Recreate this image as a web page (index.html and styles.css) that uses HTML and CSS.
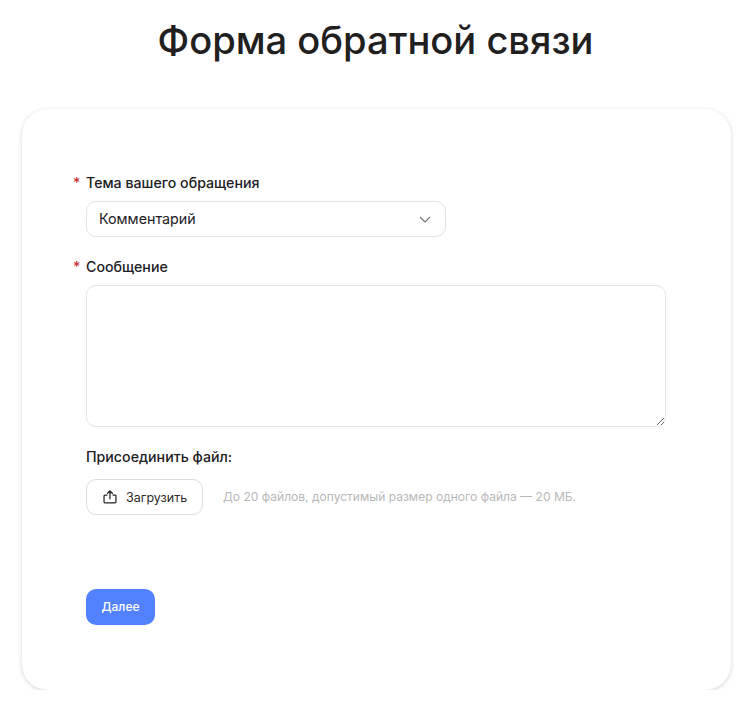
FILE: index.html
```html
<!DOCTYPE html>
<html>
<head>
    <meta charset="UTF-8">
    <title>Форма обратной связи</title>
    <link rel="stylesheet" href="styles.css">
</head>
<body>
    <h1 class="page-title">Форма обратной связи</h1>
    <form class="card">
        <div class="field field-topic">
            <div class="label required">Тема вашего обращения</div>
            <div class="select">
                <span>Комментарий</span>
                <svg class="select-arrow" width="12" height="7" viewBox="0 0 12 7" fill="none">
                    <path d="M1 1L6 6L11 1" stroke="#707070" stroke-width="1.1"/>
                </svg>
            </div>
        </div>
        <div class="field field-message">
            <div class="label required">Сообщение</div>
            <textarea class="message"></textarea>
        </div>
        <div class="field field-file">
            <div class="label">Присоединить файл:</div>
            <div class="upload-row">
                <button type="button" class="upload-button">
                    <svg width="14" height="14" viewBox="0 0 16 16" fill="none">
                        <path d="M5 5.8H2.2C1.6 5.8 1.2 6.2 1.2 6.8V13.6C1.2 14.2 1.6 14.6 2.2 14.6H13.8C14.4 14.6 14.8 14.2 14.8 13.6V6.8C14.8 6.2 14.4 5.8 13.8 5.8H11M8 10.5V1.3M4.8 4.3L8 1.1L11.2 4.3" stroke="#222" stroke-width="1.4"/>
                    </svg>
                    Загрузить
                </button>
                <span class="upload-hint">До 20 файлов, допустимый размер одного файла — 20 МБ.</span>
            </div>
        </div>
        <button type="button" class="next-button">Далее</button>
    </form>
</body>
</html>
```

FILE: styles.css
```css
body {
    margin: 0;
    background-color: #fff;
    color: #21201f;
    font-family: "Inter", "Noto Sans", sans-serif;
}

.page-title {
    margin: 0;
    padding: 16px 2px 0 0;
    height: 91px;
    box-sizing: border-box;
    text-align: center;
    font-size: 38.1px;
    line-height: 48px;
    font-weight: 500;
}

.card {
    width: 709px;
    height: 581px;
    box-sizing: border-box;
    margin: 18px 0 0 22px;
    padding: 64px 64px 0;
    border-radius: 26px;
    background-color: #fff;
    box-shadow: 0 1px 4px rgba(0, 0, 0, 0.18);
}

.label {
    position: relative;
    font-size: 14.2px;
    line-height: 20px;
    font-weight: 500;
}

.required::before {
    content: "*";
    position: absolute;
    left: -13px;
    top: 0;
    color: #c92a2a;
}

.field-topic {
    margin-bottom: 20px;
}

.select {
    display: flex;
    align-items: center;
    justify-content: space-between;
    width: 360px;
    height: 36px;
    box-sizing: border-box;
    margin-top: 8px;
    padding: 0 14px 2px 12px;
    border: 1px solid #e3e3e3;
    border-radius: 10px;
    font-size: 14.3px;
}

.select-arrow {
    margin-top: 2px;
}

.message {
    display: block;
    width: 580px;
    height: 142px;
    box-sizing: border-box;
    margin-top: 8px;
    border: 1px solid #e3e3e3;
    border-radius: 10px;
    outline: none;
}

.field-file {
    margin-top: 20px;
}

.upload-row {
    display: flex;
    align-items: center;
    margin-top: 12px;
}

.upload-button {
    display: flex;
    align-items: center;
    gap: 9px;
    width: 117px;
    height: 36px;
    padding: 0 0 0 16px;
    border: 1px solid #dcdcdc;
    border-radius: 10px;
    background-color: #fff;
    color: #2b2a29;
    font-family: inherit;
    font-size: 12.5px;
}

.upload-hint {
    margin-left: 20px;
    padding-bottom: 1px;
    color: #b8b8b8;
    font-size: 12.05px;
}

.next-button {
    display: block;
    width: 69px;
    height: 36px;
    margin-top: 74px;
    padding: 0 0 2px;
    border: none;
    border-radius: 10px;
    background-color: #5282ff;
    color: #fff;
    font-family: inherit;
    font-size: 12px;
    font-weight: 500;
}
```
